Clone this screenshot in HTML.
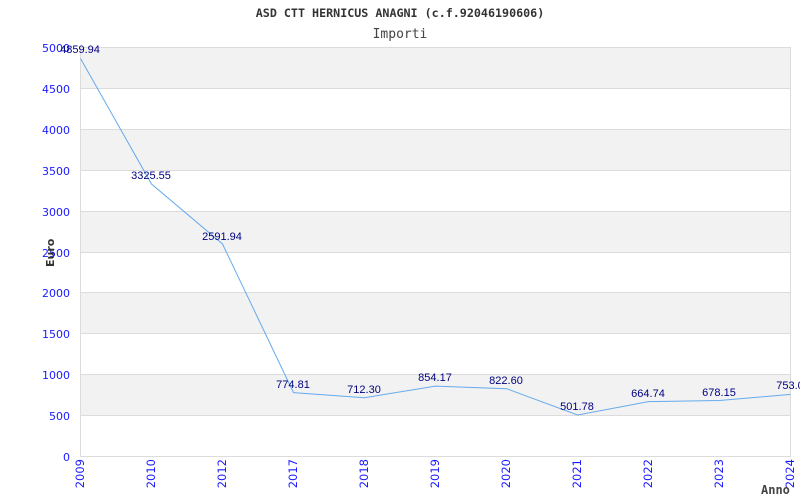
<!DOCTYPE html>
<html><head><meta charset="utf-8"><style>
html,body{margin:0;padding:0;background:#fff;width:800px;height:500px;overflow:hidden}
</style></head><body>
<svg width="800" height="500" xmlns="http://www.w3.org/2000/svg">
<rect width="800" height="500" fill="#fff"/>
<text x="400" y="17" text-anchor="middle" font-family="DejaVu Sans Mono, Liberation Mono, monospace" font-weight="bold" font-size="11.7" fill="#333">ASD CTT HERNICUS ANAGNI (c.f.92046190606)</text>
<text x="400" y="38" text-anchor="middle" font-family="DejaVu Sans Mono, Liberation Mono, monospace" font-size="13" fill="#444">Importi</text>
<g fill="#f2f2f2">
<rect x="80.5" y="47.5" width="710" height="41"/>
<rect x="80.5" y="129.5" width="710" height="41"/>
<rect x="80.5" y="211.5" width="710" height="41"/>
<rect x="80.5" y="292.5" width="710" height="41"/>
<rect x="80.5" y="374.5" width="710" height="41"/>
</g>
<g stroke="#dcdcdc" stroke-width="1">
<line x1="80" y1="47.5" x2="790" y2="47.5"/>
<line x1="80" y1="88.5" x2="790" y2="88.5"/>
<line x1="80" y1="129.5" x2="790" y2="129.5"/>
<line x1="80" y1="170.5" x2="790" y2="170.5"/>
<line x1="80" y1="211.5" x2="790" y2="211.5"/>
<line x1="80" y1="252.5" x2="790" y2="252.5"/>
<line x1="80" y1="292.5" x2="790" y2="292.5"/>
<line x1="80" y1="333.5" x2="790" y2="333.5"/>
<line x1="80" y1="374.5" x2="790" y2="374.5"/>
<line x1="80" y1="415.5" x2="790" y2="415.5"/>
<line x1="80" y1="456.5" x2="790" y2="456.5"/>
<line x1="80.5" y1="47" x2="80.5" y2="457"/>
<line x1="790.5" y1="47" x2="790.5" y2="457"/>
</g>
<g font-family="DejaVu Sans, Liberation Sans, sans-serif" font-size="11" fill="#1a1aff" text-anchor="end">
<text x="70" y="52">5000</text>
<text x="70" y="93">4500</text>
<text x="70" y="134">4000</text>
<text x="70" y="175">3500</text>
<text x="70" y="216">3000</text>
<text x="70" y="257">2500</text>
<text x="70" y="297">2000</text>
<text x="70" y="338">1500</text>
<text x="70" y="379">1000</text>
<text x="70" y="420">500</text>
<text x="70" y="461">0</text>
</g>
<g font-family="DejaVu Sans, Liberation Sans, sans-serif" font-size="11.5" fill="#1a1aff" text-anchor="end">
<text transform="translate(84,459) rotate(-90)">2009</text>
<text transform="translate(155,459) rotate(-90)">2010</text>
<text transform="translate(226,459) rotate(-90)">2012</text>
<text transform="translate(297,459) rotate(-90)">2017</text>
<text transform="translate(368,459) rotate(-90)">2018</text>
<text transform="translate(439,459) rotate(-90)">2019</text>
<text transform="translate(510,459) rotate(-90)">2020</text>
<text transform="translate(581,459) rotate(-90)">2021</text>
<text transform="translate(652,459) rotate(-90)">2022</text>
<text transform="translate(723,459) rotate(-90)">2023</text>
<text transform="translate(794,459) rotate(-90)">2024</text>
</g>
<text transform="translate(54,267) rotate(-90)" font-family="DejaVu Sans, Liberation Sans, sans-serif" font-size="11" font-weight="bold" fill="#333">Euro</text>
<text x="761" y="494" font-family="DejaVu Sans Mono, Liberation Mono, monospace" font-size="12" font-weight="bold" fill="#444">Anno</text>
<polyline fill="none" stroke="#66aaee" stroke-width="1" points="80.5,58.5 151.5,184 222.5,244 293.5,392.6 364.5,397.7 435.5,386.1 506.5,388.7 577.5,415 648.5,401.6 719.5,400.5 790.5,394.4"/>
<g font-family="Liberation Sans, sans-serif" font-size="11" fill="#000080" text-anchor="middle">
<text x="80" y="53">4859.94</text>
<text x="151" y="179">3325.55</text>
<text x="222" y="240">2591.94</text>
<text x="293" y="388">774.81</text>
<text x="364" y="393">712.30</text>
<text x="435" y="381">854.17</text>
<text x="506" y="384">822.60</text>
<text x="577" y="410">501.78</text>
<text x="648" y="397">664.74</text>
<text x="719" y="396">678.15</text>
<text x="790" y="389">753.0</text>
</g>
</svg>
</body></html>
